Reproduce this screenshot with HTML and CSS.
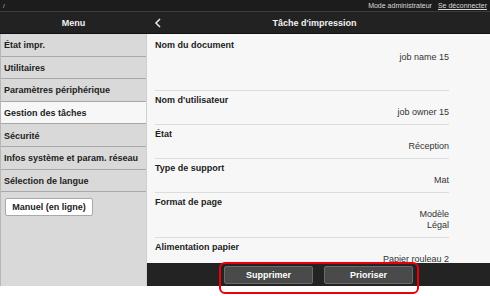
FILE: index.html
```html
<!DOCTYPE html>
<html lang="fr">
<head>
<meta charset="utf-8">
<link rel="stylesheet" href="styles.css">
</head>
<body>
<div class="page">
  <div class="topbar">
    <span class="path">/</span>
    <span class="admin">Mode administrateur</span>
    <a class="logout">Se déconnecter</a>
  </div>
  <div class="header">
    <div class="menu-title">Menu</div>
    <div class="page-title">
      <svg class="back" width="8" height="10" viewBox="0 0 8 10"><path d="M6 1 L2 5 L6 9" fill="none" stroke="#e6e6e6" stroke-width="1.6"/></svg>
      <span>Tâche d'impression</span>
    </div>
  </div>
  <div class="main">
    <nav class="sidebar">
      <div class="nav-item">État impr.</div>
      <div class="nav-item">Utilitaires</div>
      <div class="nav-item">Paramètres périphérique</div>
      <div class="nav-item active">Gestion des tâches</div>
      <div class="nav-item">Sécurité</div>
      <div class="nav-item">Infos système et param. réseau</div>
      <div class="nav-item">Sélection de langue</div>
      <div class="manual-wrap"><button class="manual">Manuel (en ligne)</button></div>
    </nav>
    <section class="content">
      <div class="scroll">
        <div class="row first">
          <div class="label">Nom du document</div>
          <div class="value">job name 15</div>
        </div>
        <div class="row">
          <div class="label">Nom d'utilisateur</div>
          <div class="value">job owner 15</div>
        </div>
        <div class="row">
          <div class="label">État</div>
          <div class="value">Réception</div>
        </div>
        <div class="row">
          <div class="label">Type de support</div>
          <div class="value">Mat</div>
        </div>
        <div class="row">
          <div class="label">Format de page</div>
          <div class="value">Modèle<br>Légal</div>
        </div>
        <div class="row">
          <div class="label">Alimentation papier</div>
          <div class="value">Papier rouleau 2</div>
        </div>
      </div>
      <div class="actions">
        <button class="act">Supprimer</button>
        <button class="act">Prioriser</button>
        <div class="highlight"></div>
      </div>
    </section>
  </div>
</div>
</body>
</html>
```

FILE: styles.css
```css
* { box-sizing: border-box; }
html, body { margin: 0; padding: 0; background: #ffffff; }
body {
  font-family: "Liberation Sans", Arial, sans-serif;
  width: 490px;
  height: 296px;
  overflow: hidden;
}
.page { display: flex; flex-direction: column; height: 286px; }

.topbar {
  height: 12px;
  background: #1c1c1c;
  border-bottom: 1px solid #3c3c3c;
  display: flex;
  align-items: center;
  padding: 0 3px 0 3px;
  font-size: 7px;
  color: #d8d8d8;
}
.path { flex: 1; font-size: 6px; color: #cfcfcf; }
.admin { margin-right: 6px; }
.logout { text-decoration: underline; color: #d8d8d8; }

.header {
  height: 22px;
  background: #222222;
  border-bottom: 1px solid #111111;
  display: flex;
  color: #f2f2f2;
  font-weight: bold;
  font-size: 9px;
}
.menu-title {
  width: 147px;
  display: flex;
  align-items: center;
  justify-content: center;
}
.page-title {
  flex: 1;
  position: relative;
  display: flex;
  align-items: center;
  justify-content: center;
  padding-right: 8px;
}
.back { position: absolute; left: 7px; top: 6px; }

.main { flex: 1; display: flex; min-height: 0; }

.sidebar {
  width: 147px;
  background: #d9d9d9;
  border-left: 1px solid #b8b8b8;
  border-right: 1px solid #cfcfcf;
  display: flex;
  flex-direction: column;
}
.nav-item {
  height: 22.6px;
  flex: none;
  border-bottom: 1px solid #a8a8a8;
  font-size: 9px;
  font-weight: bold;
  color: #222;
  display: flex;
  align-items: center;
  padding: 1px 0 0 3px;
}
.nav-item.active { background: #f7f7f7; }
.manual-wrap { padding: 6px 0 0 4px; }
.manual {
  display: block;
  font-family: inherit;
  font-size: 9px;
  font-weight: bold;
  color: #222;
  background: #ffffff;
  border: 1px solid #a9a9a9;
  border-radius: 2px;
  width: 88px;
  height: 18px;
  padding: 0;
}

.content {
  flex: 1;
  background: #f7f7f7;
  display: flex;
  flex-direction: column;
  min-width: 0;
}
.scroll {
  flex: 1;
  overflow: hidden;
  padding: 2px 41px 0 8px;
}
.row {
  border-bottom: 1px solid #dcdcdc;
  padding: 4px 0 6px;
  font-size: 9px;
  color: #222;
}
.row.first { padding-bottom: 27px; }
.label { font-weight: bold; line-height: 11px; }
.value { text-align: right; line-height: 11px; margin-top: 1px; color: #333; }

.actions {
  position: relative;
  height: 23px;
  flex: none;
  background: #232323;
  display: flex;
  align-items: center;
  justify-content: center;
  gap: 11px;
}
.act {
  font-family: inherit;
  width: 89px;
  height: 18px;
  background: #4a4a4a;
  border: 1px solid #6a6a6a;
  border-radius: 2px;
  color: #ffffff;
  font-weight: bold;
  font-size: 9px;
  padding: 0;
}
.highlight {
  position: absolute;
  left: 72px;
  top: -1px;
  width: 200px;
  height: 32px;
  border: 2px solid #e8000f;
  border-radius: 6px;
}
```
